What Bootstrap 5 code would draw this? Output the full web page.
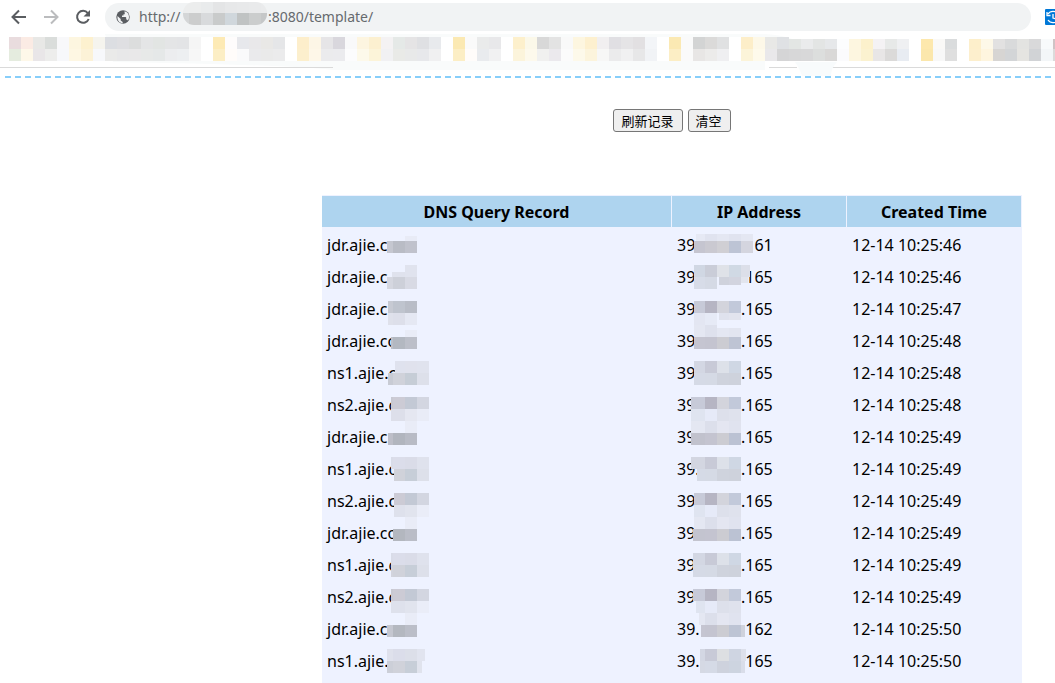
<!DOCTYPE html>
<html lang="zh-CN">
<head>
<meta charset="utf-8">
<meta name="viewport" content="width=device-width, initial-scale=1">
<title>DNS Query Record</title>
<link href="https://cdn.jsdelivr.net/npm/bootstrap@5.3.0/dist/css/bootstrap.min.css" rel="stylesheet">
<style>
  body { font-family: "Noto Sans", "Open Sans", "Noto Sans CJK SC", sans-serif; font-size: 16px; color: #000; background: #fff; overflow-x: hidden; }
  .toolbar { height: 34px; padding: 0 0 0 9px; }
  .tool-btn { width: 20px; height: 20px; margin-right: 12px; padding: 0; border: 0; background: none; line-height: 0; }
  .address { height: 28px; border-radius: 14px; background: #f1f3f4; padding-left: 10px; margin-right: 14px; }
  .address input { border: 0; outline: 0; background: none; color: #666a6e; font-size: 14px; line-height: 20px; padding: 0; margin-left: 8px; }
  .address-mask { left: 78px; top: -1px; }
  .ext-btn { width: 10px; height: 16px; overflow: hidden; }
  .bookmarks { height: 42px; overflow: hidden; }
  .bookmarks svg, .table-mask { display: block; }
  .dashes { height: 2px; margin-left: 5px; background: repeating-linear-gradient(90deg, #87cefa 0 6px, transparent 6px 10px); }
  .page-main { padding-left: 289px; }
  .tools { padding-top: 31px; gap: 5px; margin-bottom: 63px; }
  .plain-btn { height: 23px; padding: 0 8px 0 7px; border: 1px solid #767676; border-radius: 3px; background: #efefef; color: #000; font-family: "Noto Sans CJK SC", sans-serif; font-size: 13px; line-height: 20px; }
  .records-wrap { width: 700px; }
  .records { width: 100%; table-layout: fixed; border-collapse: separate; border-spacing: 0; background: #eef2ff; line-height: 20px; }
  .records th { height: 34px; padding: 0; text-align: center; font-weight: 700; background: #aed4ef; border-top: 1px solid #eef2ff; border-bottom: 2px solid #eef2ff; border-right: 1px solid #eef2ff; }
  .records td { height: 32px; padding: 0 5px; white-space: nowrap; }
  .records tr:last-child td { height: 38px; padding-bottom: 6px; }
  .ip-head { width: 64px; }
  .table-mask { left: 0; top: 0; pointer-events: none; }
</style>
</head>
<body>
<header>
  <div class="toolbar d-flex align-items-center">
    <button class="tool-btn" aria-label="Back"><svg width="20" height="20" fill="none" stroke="#5a5d61" stroke-width="2"><path d="M17 10H4M10 3.500L3.500 10l6.500 6.500"/></svg></button>
    <button class="tool-btn" aria-label="Forward"><svg width="20" height="20" fill="none" stroke="#bbbcbe" stroke-width="2"><path d="M3 10h13M10 3.500l6.500 6.500-6.500 6.500"/></svg></button>
    <button class="tool-btn" aria-label="Reload"><svg width="20" height="20"><path d="M14.800 6.100A6 6 0 1 0 15.700 12" fill="none" stroke="#5a5d61" stroke-width="2"/><path d="M17 3v6.500h-6.500z" fill="#5a5d61"/></svg></button>
    <div class="address position-relative d-flex align-items-center flex-grow-1">
      <svg class="flex-shrink-0" width="16" height="16" aria-hidden="true"><circle cx="8" cy="8" r="6.700" fill="#5a5d61"/><path d="M2.500 7l3.200 3v1.500l2 1.500v1.200C4 14 2 11 2.500 7zM9.500 2.300c3 .6 4.500 3 4.500 5.700 0 1.400-.4 2.500-1.200 3.500-.4-.8-.8-1-1.600-1V8.600l-.6-.5H7V6.600h1.500V5.200h1.300z" fill="#f1f3f4"/></svg>
      <input class="flex-grow-1" type="text" aria-label="Address" value="http://                        :8080/template/">
      <svg class="address-mask position-absolute" width="84" height="24" aria-hidden="true">
        <defs><clipPath id="urlClip"><rect width="84" height="23" rx="11"/></clipPath></defs>
        <g id="urlMask" clip-path="url(#urlClip)"></g>
      </svg>
    </div>
    <button class="ext-btn border-0 p-0 bg-transparent d-flex" aria-label="Extension"><svg class="flex-shrink-0" width="16" height="16"><rect width="16" height="16" rx="1" fill="#0078d7"/><path d="M3 5a6 6 0 0 1 10 0M3 11a6 6 0 0 0 10 0M2 3v3.500h3.500M8 5v4l3 1" fill="none" stroke="#fff" stroke-width="1.300"/></svg></button>
  </div>
  <div class="bookmarks"><svg width="1920" height="42" aria-hidden="true">
    <path d="M105 0H765q18 1 30 6h-30v30H333q-40-5-220-8z" fill="#f9fbfb"/>
    <path d="M0 33.500H333M769 33.500h28M831 33.500H1920" stroke="#dadada"/>
    <g id="bookmarkMask"></g>
    <path d="M795 28h42q-6 6-6 14h-29q-3-9-7-14z" fill="#f8fbfc"/>
  </svg></div>
  <div class="dashes"></div>
</header>
<main class="page-main">
  <div class="tools d-flex justify-content-center">
    <button class="plain-btn" type="button">刷新记录</button>
    <button class="plain-btn" type="button">清空</button>
  </div>
  <div class="records-wrap position-relative mx-auto">
    <table class="records">
      <colgroup><col class="w-50"><col class="w-25"><col class="w-25"></colgroup>
      <thead><tr><th>DNS Query Record</th><th>IP Address</th><th>Created Time</th></tr></thead>
      <tbody id="rows"></tbody>
    </table>
    <svg class="table-mask position-absolute" width="525" height="488" viewBox="322 195 525 488" aria-hidden="true"><g id="tableMask"></g></svg>
  </div>
</main>
<script src="https://cdn.jsdelivr.net/npm/bootstrap@5.3.0/dist/js/bootstrap.bundle.min.js"></script>
<script>
  const records = [
    ['jdr.ajie.c', '161', '46'], ['jdr.ajie.c', '165', '46'], ['jdr.ajie.c', '165', '47'],
    ['jdr.ajie.co', '165', '48'], ['ns1.ajie.c', '165', '48'], ['ns2.ajie.c', '165', '48'],
    ['jdr.ajie.c', '165', '49'], ['ns1.ajie.c', '165', '49'], ['ns2.ajie.c', '165', '49'],
    ['jdr.ajie.co', '165', '49'], ['ns1.ajie.c', '165', '49'], ['ns2.ajie.c', '165', '49'],
    ['jdr.ajie.c', '162', '50'], ['ns1.ajie.', '165', '50']
  ];
  document.getElementById('rows').innerHTML = records.map(([host, ip, sec]) =>
    `<tr><td>${host}</td><td><div class="d-flex"><span class="ip-head">39.</span><span>.${ip}</span></div></td><td>12-14 10:25:${sec}</td></tr>`).join('');

  // Mosaic blocks: 12px tiles on a grid, where the first tile may start off the grid
  const tile = (x, y, w, h, c) => `<rect x="${x}" y="${y}" width="${w}" height="${h}" fill="#${c}" shape-rendering="crispEdges"/>`;
  const run = (start, grid, y, colors, h = 12) => colors.split(' ').map((c, i) => {
    const x = i ? grid + (i - 1) * 12 : start;
    return tile(x, y, (grid + i * 12) - x, h, c);
  }).join('');

  document.getElementById('urlMask').innerHTML =
    run(0, 6, 0, 'eceded eceded e9ebec e4e5e6 e7e8e9 e8e9ea e9eaeb eaebec') +
    run(0, 6, 11, 'd4d6d7 cccdcd d8dadc c9cbcb d0d7dc c0c3c3 cbcdcd c5c7c8');

  const top1 = 'e9dcde fbebe4 e8e8e6 dadddb f8f8fa fdf6e0 fdf1cf f5f4ee dcdee2 dfdfe2 dcdddd e4e5e6 e2e5e3 e4e5e6 e3e4e6 f5f5f5 fff fdeab5 fefcfc e7e8ec e9e8ea e9e8e6 e5e6e8 fff fdeecb fdf6e6 e6e5e7 d9d7dd f9f9fa fdf5e0 fcf0d0 f4f2f3 e5e9e7 e5e4e5 dfe0e3 e8eaed fff fbe9b3 fafafa eaebeb e8e8ea fff fdf0cc fbf8e9 d8d8d8 e3e3e3 f9f9f9 fdf6e0 fdf0cf f1eff0 e0dfe3 e5e4e6 e2e0e2 f3f5f8 fff fbe9b3 fafafa d3d4d4 dbdad9 e0e1e2 fff fdeec9 fdf8e8 e8e8e6 dfe1e4';
  const top2 = 'e3e6e4 eaebec e3e5e4 e6e8ea fcfdfe fdf6e0 fcf1cc f4f2f4 e7e9e8 eff0f2 fff fde8ad faf9f7 dadcdd fff fdefcb fdf8e8 e2e1e1 d9dadb e3e3e1 d9d9da f8fafb cfc3c5';
  const bottom = 'e5ecdf fef8e9 e9e6e8 ededec f7f8fb fef7e3 fcf2d7 f7f8fb eaeae9 e8e8e9 e9e8e9 e7e9e8 e5e8e8 ecedef edeff1 f7f7f7 fff fceec5 fffcfa fafafb eaeaec eaeaea ebebec fff fcefcd fef7e8 ebebed ebebee fcfcfd fdf9ea fcf4d9 f1f1f3 e9eae7 e8e9e9 e7e8eb f0f0f1 fff fceec5 fffcfa e9ebee f1f1f2 fff fcf4db fdf9ec f0f0ef ebe9ed fbfbfb fdf9ea fcf4dc f7f7f6 ebebec f0f0f1 e7e7e8 f1f3f6 fff fceec5 fafafa e8e6e5 ecebea efeff1 fff fcf4d9 fefaeb e9e8ea d5d5d6 d7d7d8 d8d8d9 dcdedd d9d8d7 fbfbfd fdf6e0 fbf2d0 e8e6e6 dbdad9 e8ecf2 fff fbe7ac f8f8f8 dfdfdf fff fdefcd fef5df d7d5d3 d3d5d7 e5e4e1 d1d3d6 f3f6f8 dcdada';
  document.getElementById('bookmarkMask').innerHTML =
    run(9, 21, 3, top1) + run(789, 801, 5, top2, 10) + run(9, 21, 15, bottom);

  // Redacted parts of the table: [start x, grid x, y, colours, height]
  const blocks = [
   [405,417,236,'e8ebf6',5],[387,393,241,'c5c7d0 b9bcc5 c0c2cc'],
   [405,417,265,'e0e3ee'],[392,405,272,'dfe2ed',5],[387,393,277,'d5d7e0 cdd0d9 d8dae4'],
   [388,393,301,'c7cad3 bfc4ce b9bdc7'],[388,393,313,'dfe1eb dddfea e5e8f3'],
   [405,417,330,'e9ecf7',7],[391,393,337,'bdc0c9 b3b8c1 bcbfc9'],
   [395,405,361,'dfe2ee e0e2ed e0e3ee'],[388,393,373,'c8cbd4 d0d2da c6cdd6 dde0ea'],
   [391,393,397,'c8c9d2 cccbd5 c3c9d5 d3d6e1'],[391,393,409,'dddfea dddfea e5e7f1 e9ecf7'],
   [405,417,421,'e9ecf7'],[388,393,433,'bdbec8 b1b5be b8bbc5'],
   [391,393,457,'d9dce8 dbddea dadce8 dfe2ed'],[394,405,469,'d0d2da c7ced8 dde0ea'],
   [394,405,493,'cccbd5 c3c9d5 d3d6e1'],[394,405,505,'dee1ec e1e4ee eaedf8'],
   [405,417,517,'e9ecf7'],[393,405,529,'b3b7bf babdc7'],
   [391,393,553,'d9dce8 dbddea dadce8 dfe2ed'],[391,393,565,'d2d4dd d0d2da c7ced8 dde0ea'],
   [391,393,589,'c8c9d2 cccbd5 c3c9d5 d3d6e1'],[391,393,601,'dee1ec dee1ec e1e4ee eaedf8'],
   [405,417,613,'e9ecf7'],[387,393,625,'c5c7d0 b4b8c0 bbbec8'],
   [387,393,649,'dfe1ec dbddea dcdfe9'],[417,425,649,'e1e4ef'],[387,393,661,'cccfd8 d0d2da c7ced8'],[417,422,661,'e0e3ed'],
   [696,705,234,'e6e9f4 e0e3ef e4e7f2 e0e3ef e4e7f2',7],[694,705,241,'c5c5d0 cac9d1 d0cfd4 bdc4d5 d4d5df'],
   [694,705,265,'d0d7e3 cacdd8 dfe2e8 d0d9e4'],[741,750,265,'dcdfe9'],
   [694,705,277,'d7dce8 d5dae5'],[719,729,277,'cfd2dc d2d4df',8],[741,748,277,'e2e5ee',6],
   [694,705,301,'c7cad8 b6b5c3 d3d4dc c2c9da'],[694,705,313,'e3e6f2 e6eaf6'],[719,729,313,'dfe2ed e2e4ee',7],
   [694,705,325,'e4e7f2 dee1ed'],[717,729,328,'e4e7f2 e2e5f0',9],[694,705,337,'c5c5d1 c4c4d0 ccccd2 bec4d4'],
   [694,705,361,'d3d7e3 c8cad7 dde1e9 cfd7e4'],[694,705,373,'d5dae6 d5dae5 cfd3dd ced2dc'],
   [691,705,397,'c7cad8 b6b5c3 d3d4dc c2c9da'],[691,705,409,'dfe4f0 e6eaf8 dde0eb dfe2ed'],
   [691,705,421,'e4e7f2 dcdfeb e4e6f1 e0e3ef'],[691,705,433,'c1c2cd c4c4d0 ccccd2 bbc2d3'],
   [691,705,457,'d3d6e1 c8cad7 dde1e9 cfd7e4'],[697,705,469,'d5dae6 d5dae5 cfd3dd ced2dc'],
   [694,705,493,'c7cad8 b6b5c3 d3d4dc c2c9da'],[694,705,505,'dfe4f0 e6eaf8 dde0eb dfe2ed'],
   [694,705,517,'e4e7f2 dcdfeb e4e6f1 e0e3ef'],[693,705,529,'c3c4cf c4c4d0 ccccd2 bbc2d3'],
   [693,705,553,'d3d7e3 c8cad7 dde1e9 cfd7e4'],[693,705,565,'d5dae6 d5dae5 cfd3dd ced2dc'],
   [693,705,589,'c7cad8 b6b5c3 d3d4dc c2c9da'],[696,705,601,'dfe4f0 e6eaf8 dde0eb dfe2ed'],
   [699,705,613,'e4e7f2 dcdfeb e4e6f1 e0e3ef'],[701,705,625,'c5c5d1 c4c4d0 ccccd2 bdc4d4'],[741,745,625,'cfd2dc'],
   [700,705,649,'d3d7e3 c8cad7 dddfe2 cfd5e2'],[741,746,649,'dde0eb'],
   [700,705,661,'d5d9e4 d5dae6 ced2dd cdd4e0'],[741,745,661,'d9dde9']
  ];
  document.getElementById('tableMask').innerHTML = blocks.map(b => run(...b)).join('');
</script>
</body>
</html>
